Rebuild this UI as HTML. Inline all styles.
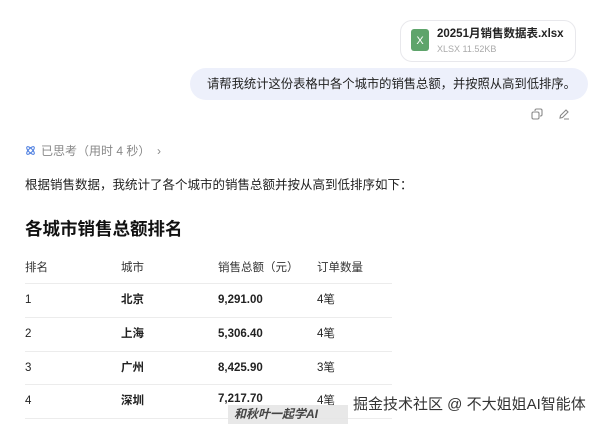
<!DOCTYPE html><html><head><meta charset="utf-8"><style>
body{margin:0;width:600px;height:426px;background:#fff;font-family:"Liberation Sans","Noto Sans CJK SC",sans-serif;color:#222;position:relative;overflow:hidden}
.a{position:absolute;white-space:nowrap;line-height:16px}
.line{position:absolute;left:25px;width:367px;height:1px;background:#ececec}
.r{font-size:11.5px}
</style></head><body>
<div class="a" style="left:400px;top:20px;width:174px;height:40px;border:1px solid #e8e8ec;border-radius:12px"></div>
<div class="a" style="left:411px;top:29px;width:18px;height:22px;background:#5ea46b;border-radius:3px;color:#fff;font-size:11px;text-align:center;line-height:24px">X</div>
<div class="a" style="left:437px;top:26px;font-size:11.5px;font-weight:bold;color:#222">20251月销售数据表.xlsx</div>
<div class="a" style="left:437px;top:41px;font-size:9px;color:#aaa">XLSX 11.52KB</div>
<div class="a" style="left:190px;top:68px;width:398px;height:32px;background:#edf0fb;border-radius:16px"></div>
<div class="a" style="left:207px;top:76px;font-size:12.3px;color:#222">请帮我统计这份表格中各个城市的销售总额，并按照从高到低排序。</div>
<svg class="a" style="left:531px;top:108px" width="12" height="12" viewBox="0 0 12 12" fill="none" stroke="#888" stroke-width="1.1"><rect x="1" y="4" width="7" height="7" rx="1.5"/><path d="M4 3V2.5A1.5 1.5 0 0 1 5.5 1H9.5A1.5 1.5 0 0 1 11 2.5V6.5A1.5 1.5 0 0 1 9.5 8H9"/></svg>
<svg class="a" style="left:558px;top:108px" width="12" height="12" viewBox="0 0 12 12" fill="none" stroke="#888" stroke-width="1.1"><path d="M2 10L2.5 7.5L8 2L10 4L4.5 9.5Z M6 11H11"/></svg>
<svg class="a" style="left:25px;top:145px" width="11" height="11" viewBox="0 0 11 11" fill="none" stroke="#4b7de0" stroke-width="1"><ellipse cx="5.5" cy="5.5" rx="5" ry="2" transform="rotate(45 5.5 5.5)"/><ellipse cx="5.5" cy="5.5" rx="5" ry="2" transform="rotate(-45 5.5 5.5)"/></svg>
<div class="a" style="left:41px;top:143px;font-size:12px;color:#888">已思考（用时 4 秒）&nbsp;&nbsp;›</div>
<div class="a" style="left:25px;top:177px;font-size:12.5px;color:#222">根据销售数据，我统计了各个城市的销售总额并按从高到低排序如下：</div>
<div class="a" style="left:25px;top:219px;font-size:17.5px;line-height:20px;font-weight:bold;color:#111">各城市销售总额排名</div>
<div class="a r" style="left:25px;top:260px;color:#333">排名</div>
<div class="a r" style="left:121px;top:260px;color:#333">城市</div>
<div class="a r" style="left:218px;top:260px;color:#333">销售总额（元）</div>
<div class="a r" style="left:317px;top:260px;color:#333">订单数量</div>
<div class="line" style="top:283px"></div>
<div class="line" style="top:317px"></div>
<div class="line" style="top:351px"></div>
<div class="line" style="top:384px"></div>
<div class="line" style="top:418px"></div>
<div class="a r" style="left:25px;top:292px">1</div><div class="a r" style="left:121px;top:292px;font-weight:bold">北京</div><div class="a r" style="left:218px;top:292px;font-weight:bold">9,291.00</div><div class="a r" style="left:317px;top:292px">4笔</div>
<div class="a r" style="left:25px;top:326px">2</div><div class="a r" style="left:121px;top:326px;font-weight:bold">上海</div><div class="a r" style="left:218px;top:326px;font-weight:bold">5,306.40</div><div class="a r" style="left:317px;top:326px">4笔</div>
<div class="a r" style="left:25px;top:360px">3</div><div class="a r" style="left:121px;top:360px;font-weight:bold">广州</div><div class="a r" style="left:218px;top:360px;font-weight:bold">8,425.90</div><div class="a r" style="left:317px;top:360px">3笔</div>
<div class="a r" style="left:25px;top:393px">4</div><div class="a r" style="left:121px;top:393px;font-weight:bold">深圳</div><div class="a r" style="left:218px;top:391px;font-weight:bold">7,217.70</div><div class="a r" style="left:317px;top:393px">4笔</div>
<div class="a" style="left:228px;top:405px;width:120px;height:19px;background:#e6e6e6;opacity:.9"></div>
<div class="a" style="left:234px;top:406px;font-size:12px;font-weight:bold;font-style:italic;color:#444">和秋叶一起学AI</div>
<div class="a" style="left:353px;top:396px;font-size:15px;line-height:18px;color:#333;text-shadow:0 0 2px #fff">掘金技术社区 @ 不大姐姐AI智能体</div>
</body></html>
